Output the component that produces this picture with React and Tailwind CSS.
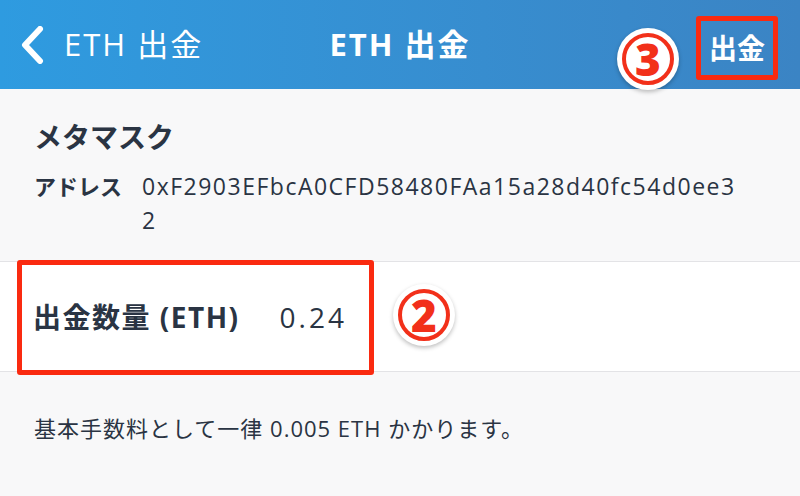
import React from 'react';

const font = { fontFamily: '"Open Sans", "Noto Sans CJK JP", sans-serif' };

function Badge({ n }) {
  return (
    <div className="w-[62px] h-[62px] rounded-full bg-white shadow-[0_2px_4px_rgba(0,0,0,0.25)] flex items-center justify-center">
      <div className="w-[52px] h-[52px] rounded-full border-[4px] border-[#f2301a] flex items-center justify-center">
        <span className="text-[44px] leading-none font-extrabold text-[#f2301a]">{n}</span>
      </div>
    </div>
  );
}

export default function App() {
  return (
    <div className="w-[800px] h-[496px] bg-[#f8f8f9] overflow-hidden text-[#2a3443]" style={font}>
      {/* header */}
      <div className="relative h-[89px] flex bg-gradient-to-r from-[#2e9be0] to-[#3b84c4] text-white">
        <div className="flex items-center pl-[20px] gap-[20px]">
          <svg width="24" height="38" viewBox="0 0 24 38" fill="none">
            <path d="M20 3 L5 19 L20 35" stroke="white" strokeWidth="6" strokeLinecap="round" strokeLinejoin="round" />
          </svg>
          <span className="text-[31px] leading-none tracking-[2px]">ETH 出金</span>
        </div>
        <div className="absolute inset-0 flex items-center justify-center text-[31px] font-bold leading-none tracking-[2px]">ETH 出金</div>
        <div className="relative ml-auto mr-[22px] mt-[16px] w-[82px] h-[64px] border-[5px] border-[#fa2a10] rounded-[3px] flex items-center justify-center">
          <span className="text-[28px] font-bold leading-none">出金</span>
        </div>
        <div className="absolute left-[617px] top-[28px]">
          <Badge n="3" />
        </div>
      </div>

      {/* account */}
      <div className="pl-[34px] pr-[20px] pt-[34px] pb-[24px] border-b border-[#e3e3e6]">
        <div className="text-[28px] font-bold leading-none">メタマスク</div>
        <div className="flex mt-[18px] text-[23px] leading-[34px]">
          <span className="w-[108px] shrink-0 font-bold text-[22px]">アドレス</span>
          <span className="break-all w-[608px] tracking-[1.5px]">0xF2903EFbcA0CFD58480FAa15a28d40fc54d0ee32</span>
        </div>
      </div>

      {/* amount */}
      <div className="relative h-[110px] bg-white border-b border-[#e3e3e6] flex items-center pl-[33px]">
        <span className="text-[28px] font-bold tracking-[1.5px]">出金数量 (ETH)</span>
        <span className="ml-[40px] text-[28px] tracking-[3px]">0.24</span>
        <div className="absolute left-[17px] top-[-2px] w-[357px] h-[115px] border-[5px] border-[#fa2a10] rounded-[3px]" />
        <div className="absolute left-[393px] top-[22px]">
          <Badge n="2" />
        </div>
      </div>

      {/* note */}
      <div className="pl-[34px] pt-[40px] text-[22px] tracking-[1px]">基本手数料として一律 0.005 ETH かかります。</div>
    </div>
  );
}
